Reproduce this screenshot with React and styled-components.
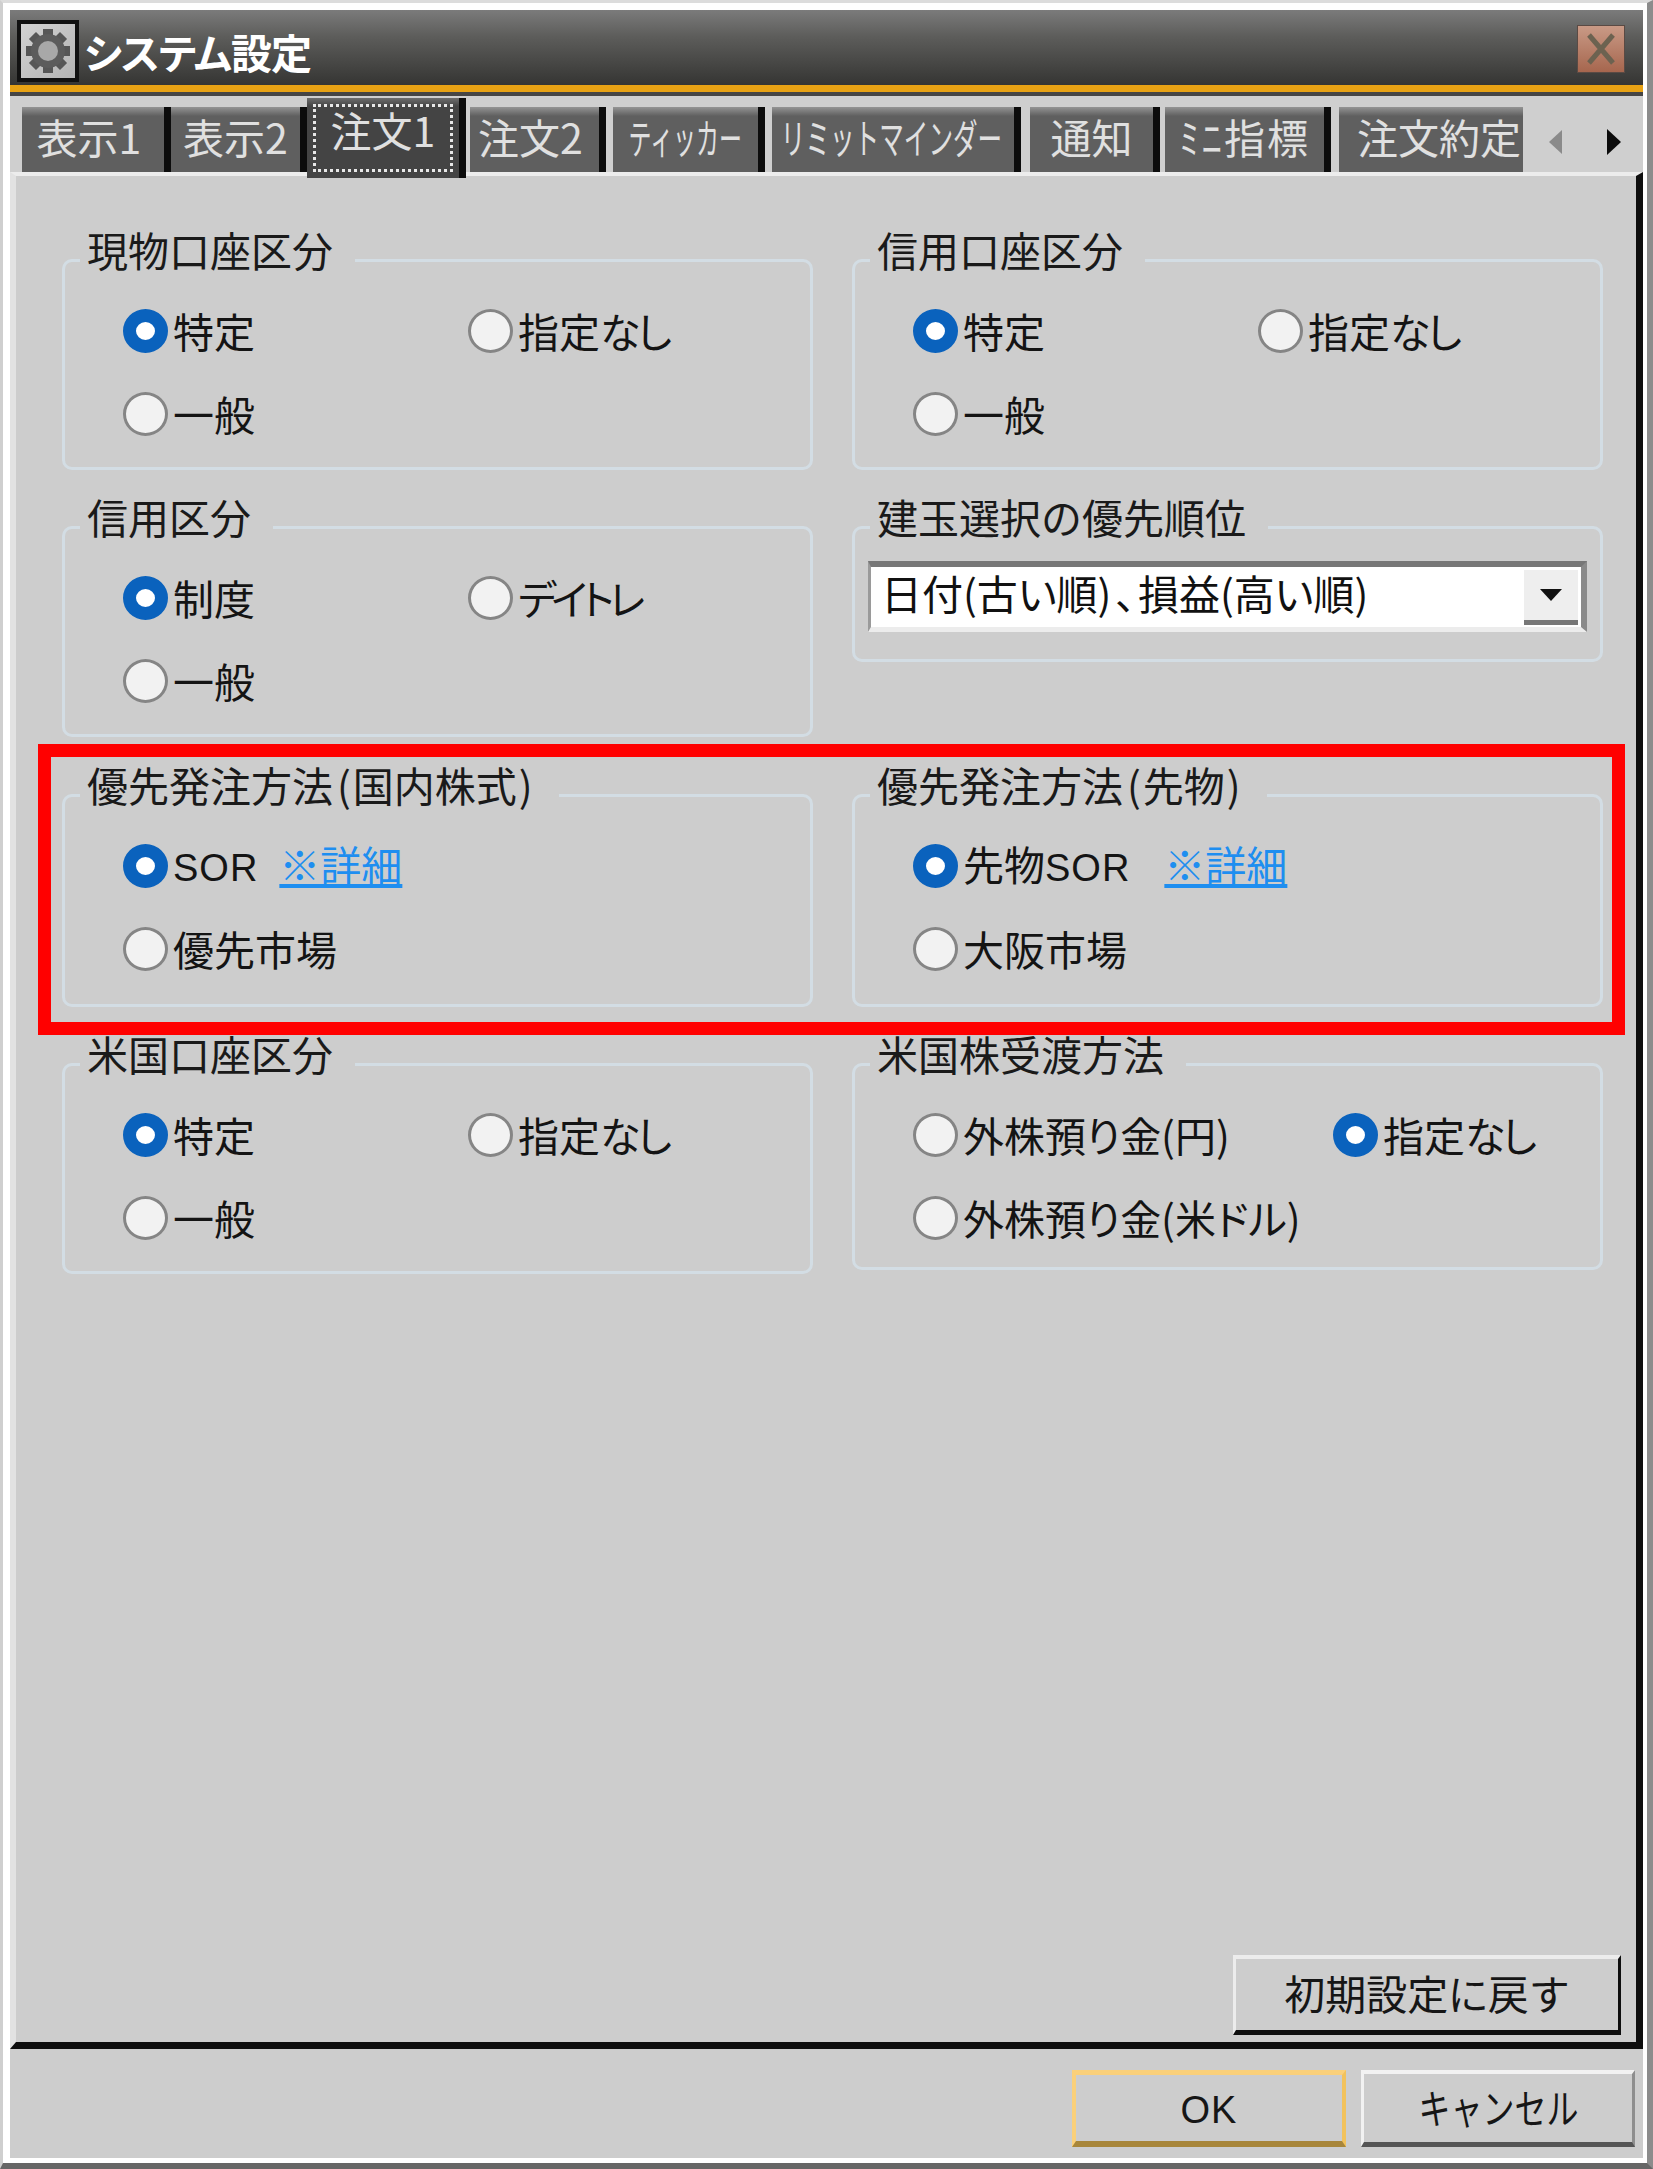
import React from 'react';
import styled, { createGlobalStyle } from 'styled-components';

const GlobalStyle = createGlobalStyle`
  html, body {
    margin: 0;
    padding: 0;
    background: #fff;
  }
  body {
    font-family: "Liberation Sans", "Noto Sans CJK JP", sans-serif;
  }
`;

const Window = styled.div`
  position: relative;
  box-sizing: border-box;
  width: 1653px;
  height: 2169px;
  padding: 7px 4px 5px 7px;
  background: #fff;
  border-left: 3px solid #cfcfcf;
  border-top: 3px solid #dcdcdc;
  border-right: 6px solid #8c8c8c;
  border-bottom: 6px solid #666;
  display: flex;
  flex-direction: column;
  color: #111;
  overflow: hidden;
`;

const TitleBar = styled.div`
  flex: none;
  box-sizing: border-box;
  height: 82px;
  display: flex;
  align-items: center;
  justify-content: space-between;
  padding: 6px 18px 0 7px;
  background: linear-gradient(#7b7b7b 0%, #5d5d5b 35%, #353533 100%);
  border-bottom: 7px solid #e8a214;
  box-shadow: 0 4px 0 #454545;
`;

const TitleLeft = styled.div`
  display: flex;
  align-items: center;
  gap: 5px;
`;

const TitleText = styled.span`
  color: #fff;
  font-family: "Noto Sans CJK JP", sans-serif;
  font-size: 41px;
  font-weight: 700;
  line-height: 48px;
  letter-spacing: -1px;
`;

const IconBox = styled.div`
  width: 62px;
  height: 62px;
  box-sizing: border-box;
  border: 4px solid #111;
  background: linear-gradient(135deg, #d2d2d2, #b4b4b4);
  display: flex;
  align-items: center;
  justify-content: center;
`;

const CloseButton = styled.div`
  width: 48px;
  height: 48px;
  margin-top: -3px;
  display: flex;
  align-items: center;
  justify-content: center;
  background: linear-gradient(#c99a86, #a6664e);
  border: 1px solid #5a4a44;
  box-sizing: border-box;
`;

const TabStrip = styled.div`
  flex: none;
  box-sizing: border-box;
  height: 76px;
  margin-top: 4px;
  padding: 11px 0 0 12px;
  background: #cfcfcf;
  display: flex;
  align-items: flex-start;
`;

const Tab = styled.div`
  position: relative;
  flex: none;
  box-sizing: border-box;
  width: ${(p) => p.$w}px;
  margin-right: ${(p) => p.$gap}px;
  height: ${(p) => (p.$active ? '80px' : '65px')};
  margin-top: ${(p) => (p.$active ? '-9px' : '0')};
  z-index: ${(p) => (p.$active ? 2 : 1)};
  display: flex;
  align-items: center;
  justify-content: ${(p) => (p.$end ? 'flex-end' : 'center')};
  padding: 0 ${(p) => p.$pad || 0}px ${(p) => (p.$active ? 0 : 7)}px 0;
  background: ${(p) =>
    p.$active
      ? 'linear-gradient(#6e6e6e, #444 10%, #444)'
      : 'linear-gradient(#949494, #5f5f5f 14%, #5f5f5f)'};
  border-right: ${(p) => (p.$end ? '0' : '7px solid #0c0c0c')};
  color: #e0e0e0;
  font-family: "Noto Sans CJK JP", sans-serif;
  font-size: 41px;
  letter-spacing: ${(p) => p.$spacing || 0}px;
  white-space: nowrap;
  overflow: hidden;
`;

const FocusRing = styled.span`
  display: flex;
  align-items: center;
  justify-content: center;
  box-sizing: border-box;
  width: 140px;
  height: 68px;
  margin-bottom: 1px;
  padding-bottom: 18px;
  border: 3px dotted #e8e8e8;
`;

// the app draws long katakana labels in a narrow bitmap font
const Squeeze = styled.span`
  display: inline-block;
  flex: none;
  transform: scaleX(${(p) => p.$x});
`;

const Kana = styled.span`
  font-feature-settings: "palt";
  letter-spacing: ${(p) => p.$tight || 0}px;
`;

const TabArrows = styled.div`
  flex: 1;
  display: flex;
  align-items: center;
  justify-content: space-between;
  height: 70px;
  padding: 0 21px 0 24px;
`;

const Panel = styled.div`
  flex: none;
  box-sizing: border-box;
  height: 1877px;
  padding: 83px 0 7px 46px;
  display: flex;
  flex-direction: column;
  background: #cdcdcd;
  border-top: 4px solid #ececec;
  border-left: 6px solid #e2e2e2;
  border-right: 7px solid #0e0e0e;
  border-bottom: 7px solid #0e0e0e;
`;

const Grid = styled.div`
  flex: none;
  display: grid;
  grid-template-columns: 751px 751px;
  column-gap: 39px;
  align-items: start;
`;

const Cell = styled.div`
  height: ${(p) => p.$h}px;
`;

const Group = styled.fieldset`
  box-sizing: border-box;
  height: ${(p) => p.$h}px;
  margin: 0;
  padding: 0;
  border: 3px solid #d3dde4;
  border-radius: 10px;
`;

const Legend = styled.legend`
  margin-left: 15px;
  padding: 0 22px 0 7px;
  font-family: "Noto Sans CJK JP", sans-serif;
  font-size: 41px;
  line-height: 52px;
  height: 0;
  color: #1a1a1a;
  white-space: nowrap;
  position: relative;
  top: -38px;
`;

const Paren = styled.span`
  padding: ${(p) => (p.$open ? '0 2px 0 4px' : '0 4px 0 2px')};
`;

const Options = styled.div`
  display: grid;
  grid-template-columns: ${(p) => p.$first || 345}px 1fr;
  grid-auto-rows: 83px;
  padding: ${(p) => p.$top}px 0 0 58px;
`;

const Option = styled.label`
  display: flex;
  align-items: center;
  height: 44px;
  gap: 5px;
  font-family: "Noto Sans CJK JP", sans-serif;
  font-size: 41px;
  white-space: nowrap;
  color: #141414;
  line-height: 44px;
`;

const Radio = styled.span`
  flex: none;
  box-sizing: border-box;
  width: 45px;
  height: 44px;
  margin-top: 2px;
  border-radius: 50%;
  border: ${(p) => (p.$on ? '13px solid #0a62bd' : '3px solid #858585')};
  background: ${(p) => (p.$on ? '#fff' : '#f2f2f2')};
`;

const Latin = styled.span`
  font-family: "Liberation Sans", sans-serif;
  font-size: 38px;
  letter-spacing: 1px;
`;

const DetailLink = styled.a`
  margin-left: ${(p) => p.$gap}px;
  color: #1e8ef0;
  font-family: "Noto Sans CJK JP", sans-serif;
  font-size: 41px;
  text-decoration: underline;
  text-underline-offset: 3px;
`;

const Select = styled.div`
  box-sizing: border-box;
  margin: 32px 13px 0 13px;
  height: 71px;
  display: flex;
  align-items: center;
  justify-content: space-between;
  background: #fff;
  border-top: 6px solid #777;
  border-left: 3px solid #9a9a9a;
  border-right: 6px solid #8a8a8a;
  border-bottom: 5px solid #ececec;
  padding: 0 3px 0 10px;
  font-family: "Noto Sans CJK JP", sans-serif;
  font-size: 41px;
  color: #111;
  white-space: nowrap;
`;

const SelectText = styled.span`
  padding-bottom: 10px;
`;

const SelectButton = styled.div`
  box-sizing: border-box;
  width: 54px;
  height: 55px;
  background: #eeeeee;
  border-bottom: 5px solid #777;
  display: flex;
  align-items: center;
  justify-content: center;
`;

const ResetRow = styled.div`
  margin-top: auto;
  padding-right: 15px;
  display: flex;
  justify-content: flex-end;
`;

const Button = styled.button`
  box-sizing: border-box;
  width: ${(p) => p.$w}px;
  height: ${(p) => p.$h}px;
  padding: 0 0 ${(p) => p.$lift || 6}px;
  background: #cdcdcd;
  border-style: solid;
  border-width: ${(p) => (p.$tone === 'accent' ? '5px 4px 6px 4px' : '4px 3px 5px 3px')};
  border-color: ${(p) =>
    p.$tone === 'accent'
      ? '#fad07a #f2c25c #a8863a #fad07a'
      : p.$tone === 'strong'
      ? '#ececec #0e0e0e #0e0e0e #ececec'
      : '#f2f2f2 #8e8e8e #555 #f2f2f2'};
  font-family: "Noto Sans CJK JP", sans-serif;
  font-size: 41px;
  color: #161616;
  white-space: nowrap;
  overflow: hidden;
`;

const Footer = styled.div`
  flex: 1;
  display: flex;
  justify-content: flex-end;
  gap: 15px;
  padding: 21px 8px 0 0;
  background: #cdcdcd;
`;

const Highlight = styled.div`
  position: absolute;
  left: 35px;
  top: 741px;
  box-sizing: border-box;
  width: 1587px;
  height: 291px;
  border: 13px solid #ff0000;
  pointer-events: none;
`;

function Gear() {
  const teeth = [0, 45, 90, 135, 180, 225, 270, 315];
  return (
    <svg width="50" height="50" viewBox="0 0 50 50">
      {teeth.map((a) => (
        <rect key={a} x="20" y="3" width="10" height="12" fill="#565656" transform={`rotate(${a} 25 25)`} />
      ))}
      <circle cx="25" cy="25" r="17" fill="#5c5c5c" />
      <circle cx="25" cy="25" r="10" fill="#a8a8a8" />
    </svg>
  );
}

function CloseIcon() {
  return (
    <svg width="34" height="36" viewBox="0 0 34 36">
      <path d="M5 4 L29 32 M29 4 L5 32" stroke="#6c6250" strokeWidth="5" fill="none" />
    </svg>
  );
}

function Caret({ dir, color }) {
  return (
    <svg width="17" height="26" viewBox="0 0 17 26">
      <path d={dir === 'left' ? 'M15 1 L2 13 L15 25 Z' : 'M2 0 L16 13 L2 26 Z'} fill={color} />
    </svg>
  );
}

function DownCaret() {
  return (
    <svg width="24" height="14" viewBox="0 0 24 14">
      <path d="M1 1 L23 1 L12 13 Z" fill="#111" />
    </svg>
  );
}

function RadioOption({ on, children }) {
  return (
    <Option>
      <Radio $on={on} />
      <span>{children}</span>
    </Option>
  );
}

const Nashi = () => <Kana $tight={-3}>なし</Kana>;

const tabs = [
  { label: '表示1', w: 149, gap: 0, pad: 8 },
  { label: '表示2', w: 136, gap: 0 },
  { label: '注文1', w: 159, gap: 4, active: true },
  { label: '注文2', w: 136, gap: 7, pad: 8 },
  { label: 'ティッカー', w: 152, gap: 7, x: 0.56 },
  { label: 'リミットマインダー', w: 249, gap: 9, x: 0.6, pad: 4 },
  { label: '通知', w: 130, gap: 5 },
  { label: 'ﾐﾆ指標', w: 166, gap: 8, spacing: 2 },
  { label: '注文約定', w: 184, gap: 0, pad: 2, end: true },
];

export default function App() {
  return (
    <Window>
      <GlobalStyle />
      <TitleBar>
        <TitleLeft>
          <IconBox>
            <Gear />
          </IconBox>
          <TitleText><Kana $tight={-1}>システム</Kana>設定</TitleText>
        </TitleLeft>
        <CloseButton>
          <CloseIcon />
        </CloseButton>
      </TitleBar>

      <TabStrip>
        {tabs.map((t) => (
          <Tab key={t.label} $w={t.w} $gap={t.gap} $pad={t.pad} $active={t.active} $end={t.end} $spacing={t.spacing}>
            {t.active ? <FocusRing>{t.label}</FocusRing> : t.x ? <Squeeze $x={t.x}>{t.label}</Squeeze> : t.label}
          </Tab>
        ))}
        <TabArrows>
          <Caret dir="left" color="#8a8a8a" />
          <Caret dir="right" color="#0c0c0c" />
        </TabArrows>
      </TabStrip>

      <Panel>
        <Grid>
          <Cell $h={267}>
            <Group $h={211}>
              <Legend>現物口座区分</Legend>
              <Options $top={46}>
                <RadioOption on>特定</RadioOption>
                <RadioOption>指定<Nashi /></RadioOption>
                <RadioOption>一般</RadioOption>
              </Options>
            </Group>
          </Cell>
          <Cell $h={267}>
            <Group $h={211}>
              <Legend>信用口座区分</Legend>
              <Options $top={46}>
                <RadioOption on>特定</RadioOption>
                <RadioOption>指定<Nashi /></RadioOption>
                <RadioOption>一般</RadioOption>
              </Options>
            </Group>
          </Cell>

          <Cell $h={268}>
            <Group $h={211}>
              <Legend>信用区分</Legend>
              <Options $top={46}>
                <RadioOption on>制度</RadioOption>
                <RadioOption><Kana $tight={-5}>デイトレ</Kana></RadioOption>
                <RadioOption>一般</RadioOption>
              </Options>
            </Group>
          </Cell>
          <Cell $h={268}>
            <Group $h={136}>
              <Legend>建玉選択の優先順位</Legend>
              <Select>
                <SelectText>日付(古<Kana>い</Kana>順)<Paren $open><Kana>、</Kana></Paren>損益(高<Kana>い</Kana>順)</SelectText>
                <SelectButton>
                  <DownCaret />
                </SelectButton>
              </Select>
            </Group>
          </Cell>

          <Cell $h={269}>
            <Group $h={213}>
              <Legend>優先発注方法<Paren $open>(</Paren>国内株式<Paren>)</Paren></Legend>
              <Options $top={46}>
                <RadioOption on>
                  <Latin>SOR</Latin>
                  <DetailLink $gap={21}>※詳細</DetailLink>
                </RadioOption>
                <span />
                <RadioOption>優先市場</RadioOption>
              </Options>
            </Group>
          </Cell>
          <Cell $h={269}>
            <Group $h={213}>
              <Legend>優先発注方法<Paren $open>(</Paren>先物<Paren>)</Paren></Legend>
              <Options $top={46}>
                <RadioOption on>
                  先物<Latin>SOR</Latin>
                  <DetailLink $gap={34}>※詳細</DetailLink>
                </RadioOption>
                <span />
                <RadioOption>大阪市場</RadioOption>
              </Options>
            </Group>
          </Cell>

          <Cell $h={211}>
            <Group $h={211}>
              <Legend>米国口座区分</Legend>
              <Options $top={46}>
                <RadioOption on>特定</RadioOption>
                <RadioOption>指定<Nashi /></RadioOption>
                <RadioOption>一般</RadioOption>
              </Options>
            </Group>
          </Cell>
          <Cell $h={211}>
            <Group $h={207}>
              <Legend>米国株受渡方法</Legend>
              <Options $top={46} $first={420}>
                <RadioOption>外株預<Kana>り</Kana>金(円)</RadioOption>
                <RadioOption on>指定<Nashi /></RadioOption>
                <RadioOption>外株預<Kana>り</Kana>金(米<Kana>ドル</Kana>)</RadioOption>
              </Options>
            </Group>
          </Cell>
        </Grid>
        <ResetRow>
          <Button $w={388} $h={80} $tone="strong">初期設定<Kana>に</Kana>戻す</Button>
        </ResetRow>
      </Panel>

      <Footer>
        <Button $w={274} $h={77} $tone="accent" $lift={12}><Latin>OK</Latin></Button>
        <Button $w={274} $h={77} $lift={4}><Squeeze $x={0.78}>キャンセル</Squeeze></Button>
      </Footer>

      <Highlight />
    </Window>
  );
}
